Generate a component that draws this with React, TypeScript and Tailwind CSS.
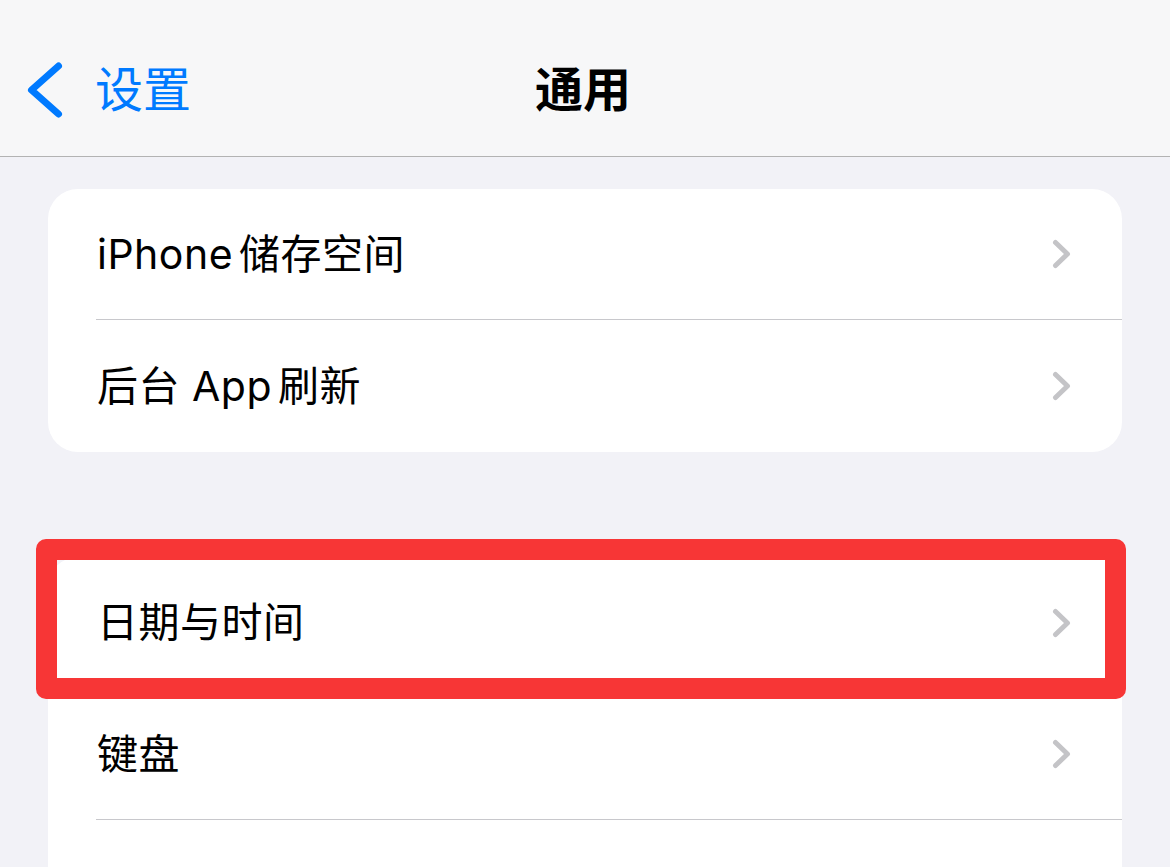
import React from "react";

const font = { fontFamily: 'Inter, "Noto Sans CJK SC", sans-serif' };

function Chevron() {
  return (
    <svg width="20" height="32" viewBox="0 0 20 32" className="shrink-0">
      <path d="M3.5 4.5 L15.5 16 L3.5 27.5" fill="none" stroke="#c4c4c7" strokeWidth="5" strokeLinecap="round" strokeLinejoin="round" />
    </svg>
  );
}

function Row({ label, h, last, children }: { label?: React.ReactNode; h: string; last?: boolean; children?: React.ReactNode }) {
  return (
    <div className="relative pl-[48px]">
      <div className={`${h} flex items-center justify-between pr-[50px] ${last ? "" : "border-b border-[#c8c8cc]"}`}>
        {label && (
          <>
            <span className="text-[41px] text-black leading-none pl-[1px] tracking-[0.5px]">{label}</span>
            <Chevron />
          </>
        )}
      </div>
      {children}
    </div>
  );
}

export default function App() {
  return (
    <div className="h-[867px] w-[1170px] overflow-hidden bg-[#f2f2f7]" style={font}>
      {/* nav bar */}
      <div className="h-[157px] bg-[#f7f7f8] border-b border-[#b3b3b3] grid grid-cols-[1fr_auto_1fr] items-center pt-[24px]">
        <div className="flex items-center pl-[24px]">
          <svg width="40" height="60" viewBox="0 0 40 60">
            <path d="M34.5 6 L7.5 30 L34.5 54" fill="none" stroke="#007aff" strokeWidth="7" strokeLinecap="round" strokeLinejoin="round" />
          </svg>
          <span className="ml-[31px] text-[48px] text-[#007aff] leading-none">设置</span>
        </div>
        <div className="text-[48px] font-bold text-black leading-none pr-[4px]">通用</div>
        <div />
      </div>

      <div className="mt-[32px] mx-[48px] bg-white rounded-[30px]">
        <Row label={<>iPhone<span className="ml-[6px]">储存空间</span></>} h="h-[131px]" />
        <Row label={<>后台 App<span className="ml-[6px]">刷新</span></>} h="h-[132px]" last />
      </div>

      <div className="mt-[105px] mx-[48px] bg-white rounded-t-[30px]">
        <Row label="日期与时间" h="h-[132px]">
          <div className="absolute left-[-12px] top-[-18px] w-[1090px] h-[160px] border-[21px] border-[#f73636] rounded-[10px]" />
        </Row>
        <Row label="键盘" h="h-[131px]" />
        <Row h="h-[131px]" last />
      </div>
    </div>
  );
}
